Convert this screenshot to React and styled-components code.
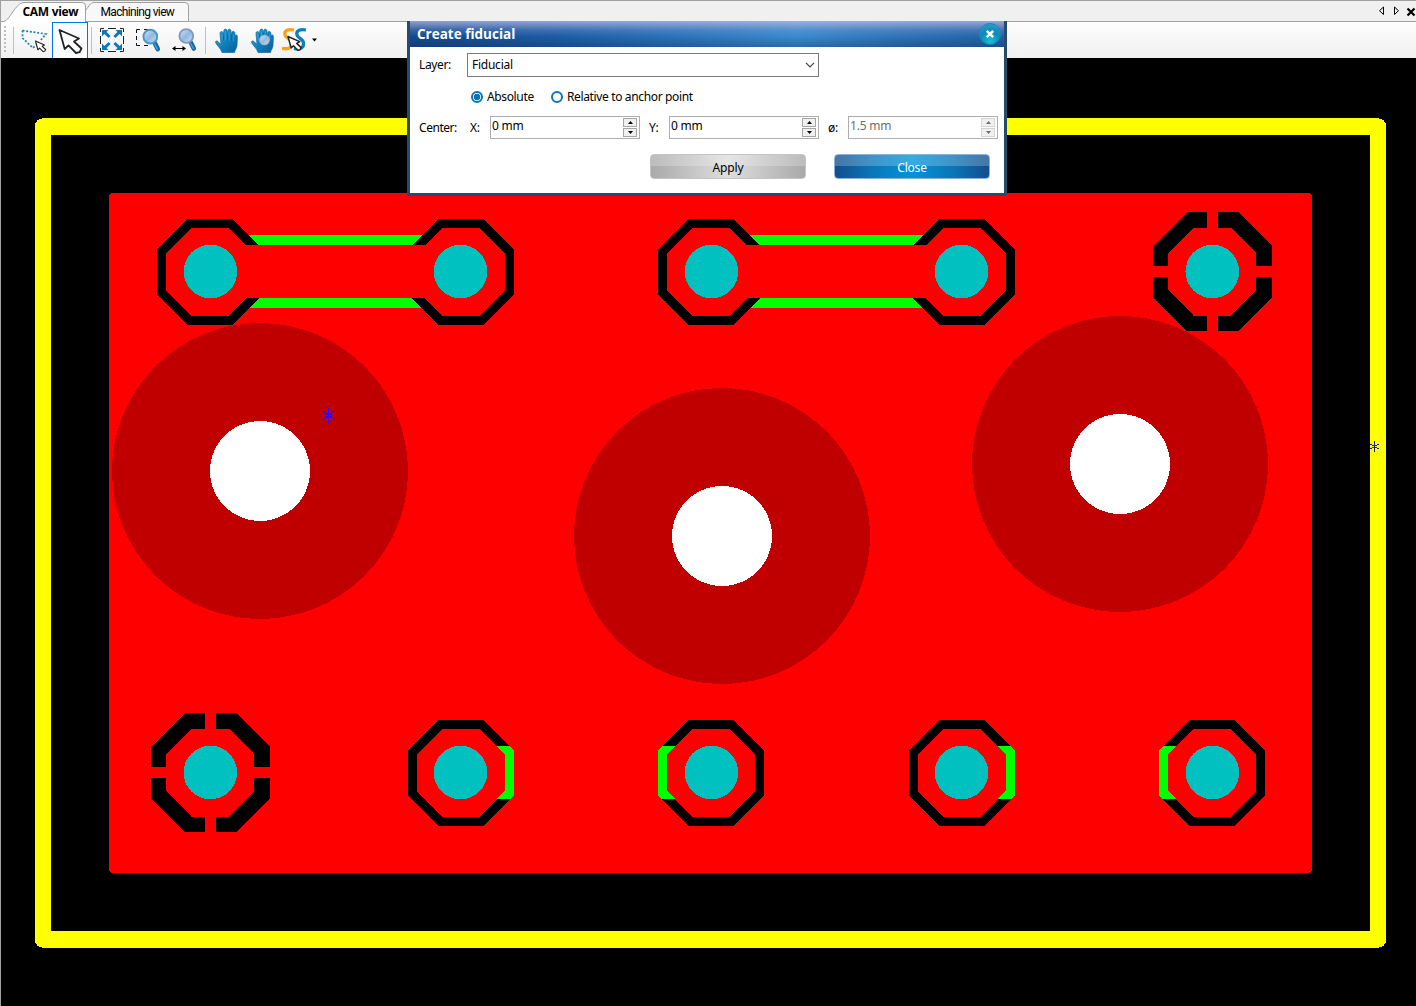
import React from 'react';
import styled, { createGlobalStyle } from 'styled-components';

const Global = createGlobalStyle`
  * { box-sizing: border-box; }
  body { margin: 0; background: #000; overflow: hidden; }
`;

const Window = styled.div`
  width: 1416px;
  height: 1006px;
  display: flex;
  flex-direction: column;
  position: relative;
  background: #000;
  border-left: 1px solid #a0a0a0;
  font-family: 'Open Sans', 'Noto Sans', sans-serif;
  font-size: 12px;
  color: #000;
`;

const TabBar = styled.div`
  height: 22px;
  flex: none;
  display: flex;
  justify-content: space-between;
  background: #f0f0f0;
  border-top: 1px solid #a0a0a0;
`;
const Tabs = styled.div`display: flex;`;
const Tab = styled.div`
  display: grid;
  width: ${p => p.$w}px;
  height: 21px;
  > * { grid-area: 1 / 1; }
`;
const TabLine = styled.div`
  flex: 1;
  border-bottom: 1px solid #a0a0a0;
`;
const TabText = styled.span`
  padding-left: ${p => p.$pad}px;
  line-height: 22px;
  white-space: nowrap;
  font-family: ${p => (p.$bold ? "'Open Sans'" : "'Roboto'")}, sans-serif;
  font-weight: ${p => (p.$bold ? 700 : 400)};
  font-size: 12px;
  letter-spacing: ${p => p.$ls || 0}px;
`;
const TabTools = styled.div`
  width: 44px;
  border-bottom: 1px solid #a0a0a0;
`;

const ToolBar = styled.div`
  height: 36px;
  flex: none;
  display: flex;
  background: linear-gradient(#fdfdfd, #f1f1f1);
`;
const Grip = styled.div`
  width: 2px;
  height: 28px;
  margin: 4px 7px 0 3px;
  background: repeating-linear-gradient(#bdbdbd 0 2px, transparent 2px 4px);
`;
const Sep = styled.div`
  width: 1px;
  height: 27px;
  margin: 5px ${p => p.$r}px 0 ${p => p.$l}px;
  background: #c0c0c0;
`;
const ToolButton = styled.div`
  width: 36px;
  height: 36px;
  flex: none;
  background: ${p => (p.$on ? '#fafbfc' : 'transparent')};
  border: solid #0078d7;
  border-width: ${p => (p.$on ? '1px 1px 0' : '0')};
  display: flex;
  svg { display: block; margin: ${p => (p.$on ? '-1px' : '0')}; flex: none; }
`;

const Canvas = styled.svg`
  display: block;
  flex: none;
  width: 1415px;
  height: 948px;
`;

const Dialog = styled.div`
  position: absolute;
  left: 406px;
  top: 21px;
  width: 600px;
  height: 175px;
  background: #fff;
  border: 3px solid #264b6b;
  border-top: 0;
`;
const TitleBar = styled.div`
  height: 26px;
  display: flex;
  justify-content: space-between;
  align-items: center;
  padding: 0 3px 0 7px;
  background:
    linear-gradient(rgba(190,190,225,.75), rgba(140,165,215,.28) 35%, rgba(255,255,255,0) 60%, rgba(10,30,90,.3)),
    linear-gradient(90deg, #15488c, #1d5ca3 25%, #3a8acc 65%, #2f74b7 82%, #2461a4);
  svg { margin-bottom: 1px; }
`;
const Title = styled.span`
  color: #fff;
  font-weight: 700;
  font-size: 13.5px;
  line-height: 24px;
  white-space: nowrap;
`;
const Body = styled.div`
  display: flex;
  flex-direction: column;
  font-family: 'Noto Sans', sans-serif;
`;
const Row = styled.div`
  display: flex;
  align-items: center;
  height: ${p => p.$h}px;
  margin-top: ${p => p.$mt}px;
  padding-left: ${p => p.$pl}px;
`;
const Label = styled.span`
  width: ${p => p.$w}px;
  flex: none;
  font-size: 12px;
  line-height: 18px;
  letter-spacing: ${p => p.$ls ?? -0.36}px;
  white-space: nowrap;
`;
const Select = styled.div`
  width: 352px;
  height: 24px;
  border: 1px solid #7a7a7a;
  display: flex;
  justify-content: space-between;
  align-items: center;
  padding: 0 3px 0 4px;
`;
const Radio = styled.span`
  width: 12px;
  height: 12px;
  margin-right: 4px;
  flex: none;
  border-radius: 50%;
  border: 2px solid #0c74b8;
  background: ${p => (p.$on ? 'radial-gradient(circle, #0c74b8 0 3px, #fff 3.6px)' : '#fff')};
`;
const Spin = styled.div`
  width: 150px;
  height: 23px;
  border: 1px solid #abadb3;
  display: flex;
  justify-content: space-between;
  padding: 0 2px 0 1px;
  margin-right: ${p => p.$mr || 0}px;
  color: ${p => (p.$off ? '#6d6d6d' : '#000')};
`;
const Arrows = styled.div`
  width: 14px;
  height: 19px;
  margin-top: 1px;
  display: grid;
  grid-template-rows: 9px 9px;
  gap: 1px;
`;
const Arrow = styled.div`
  border: 1px solid ${p => (p.$off ? '#d4d4d4' : '#a5a5a5')};
  background: #f0f0f0;
  display: flex;
  align-items: center;
  justify-content: center;
`;
const Button = styled.div`
  width: 156px;
  height: 25px;
  border-radius: 4px;
  border: 1px solid ${p => (p.$blue ? '#8db3d4' : '#c4c4c4')};
  display: flex;
  align-items: center;
  justify-content: center;
  padding-top: 1px;
  margin-right: ${p => p.$mr || 0}px;
  color: ${p => (p.$blue ? '#fff' : '#000')};
  letter-spacing: ${p => p.$ls}px;
  background:
    linear-gradient(rgba(255,255,255,.22) 0 46%, transparent 46%),
    ${p => (p.$blue
      ? 'linear-gradient(90deg, #124e8d, #0a77bb 25%, #0294d6 50%, #0a77bb 75%, #124e8d)'
      : 'linear-gradient(90deg, #a9a9a9, #dedede 50%, #a9a9a9)')};
`;

const CURSOR = 'M0 0 L5.2 19 L9 15.4 L16.5 23 L20 22.2 L22 18.5 L14.5 11.5 L19.5 8.5 Z';

function Cursor({ x, y, s = 1, w = 2 }) {
  return <path d={CURSOR} transform={`translate(${x} ${y}) scale(${s})`} fill="#fff" stroke="#222" strokeWidth={w} strokeLinejoin="round" />;
}

function Lens({ cx, cy, rim }) {
  return (
    <g>
      <path d={`M${cx + 4.5} ${cy + 6.5} L${cx + 7.5} ${cy + 12.5}`} stroke="#1769a0" strokeWidth="4.6" strokeLinecap="round" />
      <path d={`M${cx + 4} ${cy + 7} L${cx + 7.4} ${cy + 13}`} stroke="#46a4d4" strokeWidth="1.4" />
      <circle cx={cx} cy={cy} r="6.9" fill="url(#glass)" stroke={rim} strokeWidth="1.9" />
    </g>
  );
}

const HAND = 'M7 24 C6 20 2 17 0.8 14.5 C-0.1 12.6 1.6 11.8 3 13 L6 16 L5 5 C4.9 2.6 7.8 2.3 8.2 4.6 L8.6 7 L8.8 2.4 C9 0 12 0 12 2.4 L12.4 6 L12.8 2.2 C13 0 16 .2 16 2.6 L16.2 7 L16.8 4.4 C17.2 2 20 2.5 19.8 5 L20.6 8 C21 6 22.6 6 22.4 9 L22 17 C21.8 20 20 21 19.5 24 Z';
function Hand({ x, y }) {
  return (
    <g transform={`translate(${x} ${y})`}>
      <path d={HAND} fill="url(#hand)" stroke="#0b6aa3" strokeWidth=".7" />
      <path d="M8.5 7V12M12.5 6V12M16.3 7V12" stroke="#075c95" strokeWidth=".7" fill="none" />
      <path d="M7 6V12M10.5 3V12M14.3 3V12M18.4 6V13" stroke="#35a5d8" strokeWidth=".8" fill="none" />
    </g>
  );
}

function Icon({ x, w = 36, children }) {
  return <svg width={w} height="36" viewBox={`${x} 22 ${w} 36`}>{children}</svg>;
}

function Spinner({ value, off, mr }) {
  const c = off ? '#6d6d6d' : '#000';
  return (
    <Spin $off={off} $mr={mr}>
      <Label $ls={-0.2}>{value}</Label>
      <Arrows>
        <Arrow $off={off}><svg width="5" height="3"><path d="M2.5 0L5 3H0Z" fill={c} /></svg></Arrow>
        <Arrow $off={off}><svg width="5" height="3"><path d="M0 0H5L2.5 3Z" fill={c} /></svg></Arrow>
      </Arrows>
    </Spin>
  );
}

const OCT_OUT = 'M-22.5 -53H22.5L53 -22.5V22.5L22.5 53H-22.5L-53 22.5V-22.5Z';
const OCT_IN = 'M-18.5 -44H18.5L44 -18.5V18.5L18.5 44H-18.5L-44 18.5V-18.5Z';
const GREEN = 'M35.5 -27H49L53 -22.5V22.5L49 26H35.5L44 18V-18Z';

function Pad({ x, y, bridge, dot }) {
  return (
    <g>
      <g transform={`translate(${x} ${y + 0.5})`}>
        <path d={OCT_OUT + OCT_IN} fillRule="evenodd" fill="#000" />
        {bridge && <path d={GREEN} fill="#0f0" transform={bridge < 0 ? 'scale(-1 1)' : undefined} />}
      </g>
      <circle cx={dot} cy={y} r="26.8" fill="#00c0c0" />
    </g>
  );
}

function Link({ x }) {
  return (
    <g>
      <rect x={x + 35} y="235" width="180" height="73" fill="#0f0" />
      <path d={OCT_OUT} transform={`translate(${x} 272)`} fill="#f00" />
      <path d={OCT_OUT} transform={`translate(${x + 251} 272)`} fill="#f00" />
      <Pad x={x} y={271.5} dot={x + 0.4} />
      <Pad x={x + 251} y={271.5} dot={x + 250.5} />
      <rect x={x + 34} y="245" width="183" height="53" fill="#f00" />
      <circle cx={x + 0.4} cy="271.5" r="26.8" fill="#00c0c0" />
      <circle cx={x + 250.5} cy="271.5" r="26.8" fill="#00c0c0" />
    </g>
  );
}

function Thermal({ x, y }) {
  return (
    <g transform={`translate(${x} ${y})`}>
      <path
        fill="#000"
        d="M34.5 0H54V16H40.5L15 41V54H0V34ZM65 0H85L119 34V54H103V41L78 16H65ZM0 65H15V77.5L41 104H54V119H33.5L0 85.5ZM103 65H119V85L85 119H65V104H77L103 78Z"
      />
      <circle cx="59.3" cy="59.5" r="26.8" fill="#00c0c0" />
    </g>
  );
}

function Hole({ x, y }) {
  return (
    <g>
      <circle cx={x} cy={y} r="148" fill="#c00000" />
      <circle cx={x} cy={y} r="50" fill="#fff" />
    </g>
  );
}

export default function App() {
  return (
    <Window>
      <Global />
      <TabBar>
        <Tabs>
          <Tab $w={85}>
            <svg width="85" height="21">
              <path d="M0 20.5H3C9 20 14 3 22 1.5H81Q84.5 1.5 84.5 5V21H0Z" fill="#fff" />
              <path d="M0 20.5H3C9 19 14 3 22 1.5H81Q84.5 1.5 84.5 5V21" fill="none" stroke="#a0a0a0" />
            </svg>
            <TabText $bold $pad={21.5} $ls={-0.3}>CAM view</TabText>
          </Tab>
          <Tab $w={103}>
            <svg width="103" height="21">
              <path d="M0 9C3 5 4 2 8 1.5H99Q102.5 1.5 102.5 5V20.5H0Z" fill="#f8f8f8" />
              <path d="M0 9C3 5 4 2 8 1.5H99Q102.5 1.5 102.5 5V20.5H0" fill="none" stroke="#a0a0a0" />
            </svg>
            <TabText $pad={14.5} $ls={-0.65}>Machining view</TabText>
          </Tab>
        </Tabs>
        <TabLine />
        <TabTools>
          <svg width="44" height="20" viewBox="1372 1 44 20">
            <path d="M1383.5 7V14.5L1379.5 10.7ZM1394.5 7V14.5L1398.5 10.7Z" fill="none" stroke="#000" />
            <path d="M1407.5 8.5L1414.5 15.5M1414.5 8.5L1407.5 15.5" stroke="#000" strokeWidth="2.2" />
          </svg>
        </TabTools>
      </TabBar>

      <ToolBar>
        <Grip />
        <Sep $l={0} $r={2} />
        <ToolButton>
          <Icon x={16}>
            <defs>
              <linearGradient id="hand" x1="0" y1="0" x2="1" y2="1">
                <stop offset="0" stopColor="#35a3d6" /><stop offset=".5" stopColor="#0e82bd" /><stop offset="1" stopColor="#0a5d97" />
              </linearGradient>
              <linearGradient id="glass" x1="0" y1="0" x2="1" y2="1">
                <stop offset="0" stopColor="#d3e6f6" /><stop offset=".5" stopColor="#8fb9e3" /><stop offset="1" stopColor="#cbe2f5" />
              </linearGradient>
            </defs>
            <path d="M22.5 30.5L46 34L40 41M22.5 30.5V38L33 48L36 45" fill="none" stroke="#1f7fb5" strokeWidth="1.7" strokeDasharray="2 1.7" />
            <Cursor x={35.5} y={41} s={0.46} w={2.4} />
          </Icon>
        </ToolButton>
        <ToolButton $on><Icon x={52}><Cursor x={59.5} y={30} w={1.8} /></Icon></ToolButton>
        <Sep $l={3} $r={4} />
        <ToolButton>
          <Icon x={96}>
            <path d="M100.5 32V28.5H104M108 28.5H116M120 28.5H123.5V32M123.5 36V44M123.5 48V51.5H120M116 51.5H108M104 51.5H100.5V48M100.5 44V36" fill="none" stroke="#222" />
            <g fill="#0f78b4">
              <path d="M102 30H108.5L106.6 32L110.6 36L108.6 38L104.4 34L102 36.5Z" />
              <path d="M122 30H115.5L117.4 32L113.4 36L115.4 38L119.6 34L122 36.5Z" />
              <path d="M102 50H108.5L106.6 48L110.6 44L108.6 42L104.4 46L102 43.5Z" />
              <path d="M122 50H115.5L117.4 48L113.4 44L115.4 42L119.6 46L122 43.5Z" />
            </g>
          </Icon>
        </ToolButton>
        <ToolButton>
          <Icon x={132}>
            <path d="M136.5 33V29.5H140M144 29.5H148M136.5 36V40M136.5 43V45.5H140M144 45.5H148" fill="none" stroke="#111" />
            <Lens cx={150.3} cy={36.6} rim="#4c97bf" />
          </Icon>
        </ToolButton>
        <ToolButton>
          <Icon x={168}>
            <Lens cx={186.3} cy={36} rim="#8798b8" />
            <path d="M174 48.5H184" stroke="#000" />
            <path d="M172 48.5L175.5 46V51ZM186 48.5L182.5 46V51Z" />
          </Icon>
        </ToolButton>
        <Sep $l={1} $r={4} />
        <ToolButton><Icon x={210}><Hand x={215} y={28.5} /></Icon></ToolButton>
        <ToolButton>
          <Icon x={246}>
            <Hand x={251} y={28.5} />
            <path d="M267 43L271 50" stroke="#1769a0" strokeWidth="2.5" />
            <circle cx="264.5" cy="40" r="4.6" fill="url(#glass)" stroke="#a9b9c8" strokeWidth="1.5" />
          </Icon>
        </ToolButton>
        <ToolButton>
          <Icon x={282} w={38}>
            <path d="M294 30C288 28.8 284.6 30.5 284.8 34C285 38.5 291.6 38.5 291.6 43.5C291.6 48.5 287 49.5 282 48.3" fill="none" stroke="#f6a21a" strokeWidth="3.3" />
            <path d="M306 30C300 28.8 296.6 30.5 296.8 34C297 38.5 303.6 38.5 303.6 43.5C303.6 48.5 299 49.5 294 48.3" fill="none" stroke="#0f7fb8" strokeWidth="3.3" />
            <Cursor x={288} y={36.5} s={0.6} w={2.4} />
            <path d="M312 38.5H317L314.5 41.5Z" />
          </Icon>
        </ToolButton>
      </ToolBar>

      <Canvas viewBox="1 58 1415 948" shapeRendering="crispEdges">
        <rect x="43" y="126.5" width="1335" height="813" fill="#000" stroke="#ff0" strokeWidth="16.5" strokeLinejoin="round" />
        <rect x="109" y="193" width="1203" height="680" rx="4" fill="#f00" />
        <Hole x={260} y={471} />
        <Hole x={722} y={536} />
        <Hole x={1120} y={464} />
        <Link x={210} />
        <Link x={711} />
        <Thermal x={1153} y={212} />
        <Thermal x={151} y={713} />
        <Pad x={461} y={772.5} dot={460.5} bridge={1} />
        <Pad x={711} y={772.5} dot={711.4} bridge={-1} />
        <Pad x={962} y={772.5} dot={961.5} bridge={1} />
        <Pad x={1212} y={772.5} dot={1212.4} bridge={-1} />
        <g fill="#3000ff">
          <path d="M328 407H329V424H328ZM326 414H331V415H326ZM326 416H331V417H326Z" />
          <path d="M322 411H324V412H322ZM324 412H325V413H324ZM325 413H327V414H325ZM333 411H335V412H333ZM332 412H333V413H332ZM330 413H332V414H330Z" />
          <path d="M322 419H324V420H322ZM324 418H325V419H324ZM325 417H327V418H325ZM333 419H335V420H333ZM332 418H333V419H332ZM330 417H332V418H330Z" />
        </g>
        <g fill="none" stroke="#1818c0">
          <path d="M1374.5 441V452M1372 445.5H1377M1372 447.5H1377" />
          <path d="M1370 444.5H1372M1377 444.5H1379M1370 448.5H1372M1377 448.5H1379" />
        </g>
      </Canvas>

      <Dialog>
        <TitleBar>
          <Title>Create fiducial</Title>
          <svg width="22" height="22" viewBox="0 0 22 22">
            <defs>
              <radialGradient id="close" cx=".5" cy=".85" r=".8">
                <stop offset="0" stopColor="#12c0dc" /><stop offset=".6" stopColor="#078bb8" /><stop offset="1" stopColor="#2b9ac4" />
              </radialGradient>
            </defs>
            <circle cx="11" cy="11" r="10.5" fill="url(#close)" stroke="#2680b4" />
            <path d="M7.8 7.8L14.2 14.2M14.2 7.8L7.8 14.2" stroke="#fff" strokeWidth="2.6" />
          </svg>
        </TitleBar>
        <Body>
          <Row $h={24} $mt={6} $pl={9}>
            <Label $w={48}>Layer:</Label>
            <Select>
              <Label $ls={-0.25}>Fiducial</Label>
              <svg width="10" height="6"><path d="M1 .8L5 4.8L9 .8" fill="none" stroke="#444" strokeWidth="1.2" /></svg>
            </Select>
          </Row>
          <Row $h={18} $mt={11} $pl={61}>
            <Radio $on />
            <Label $w={64}>Absolute</Label>
            <Radio />
            <Label>Relative to anchor point</Label>
          </Row>
          <Row $h={23} $mt={10} $pl={9}>
            <Label $w={51} $ls={-0.45}>Center:</Label>
            <Label $w={20}>X:</Label>
            <Spinner value="0 mm" mr={9} />
            <Label $w={20}>Y:</Label>
            <Spinner value="0 mm" mr={9} />
            <Label $w={20}>ø:</Label>
            <Spinner value="1.5 mm" off />
          </Row>
          <Row $h={25} $mt={15} $pl={240}>
            <Button $mr={28} $ls={-0.1}>Apply</Button>
            <Button $blue $ls={-0.2}>Close</Button>
          </Row>
        </Body>
      </Dialog>
    </Window>
  );
}
